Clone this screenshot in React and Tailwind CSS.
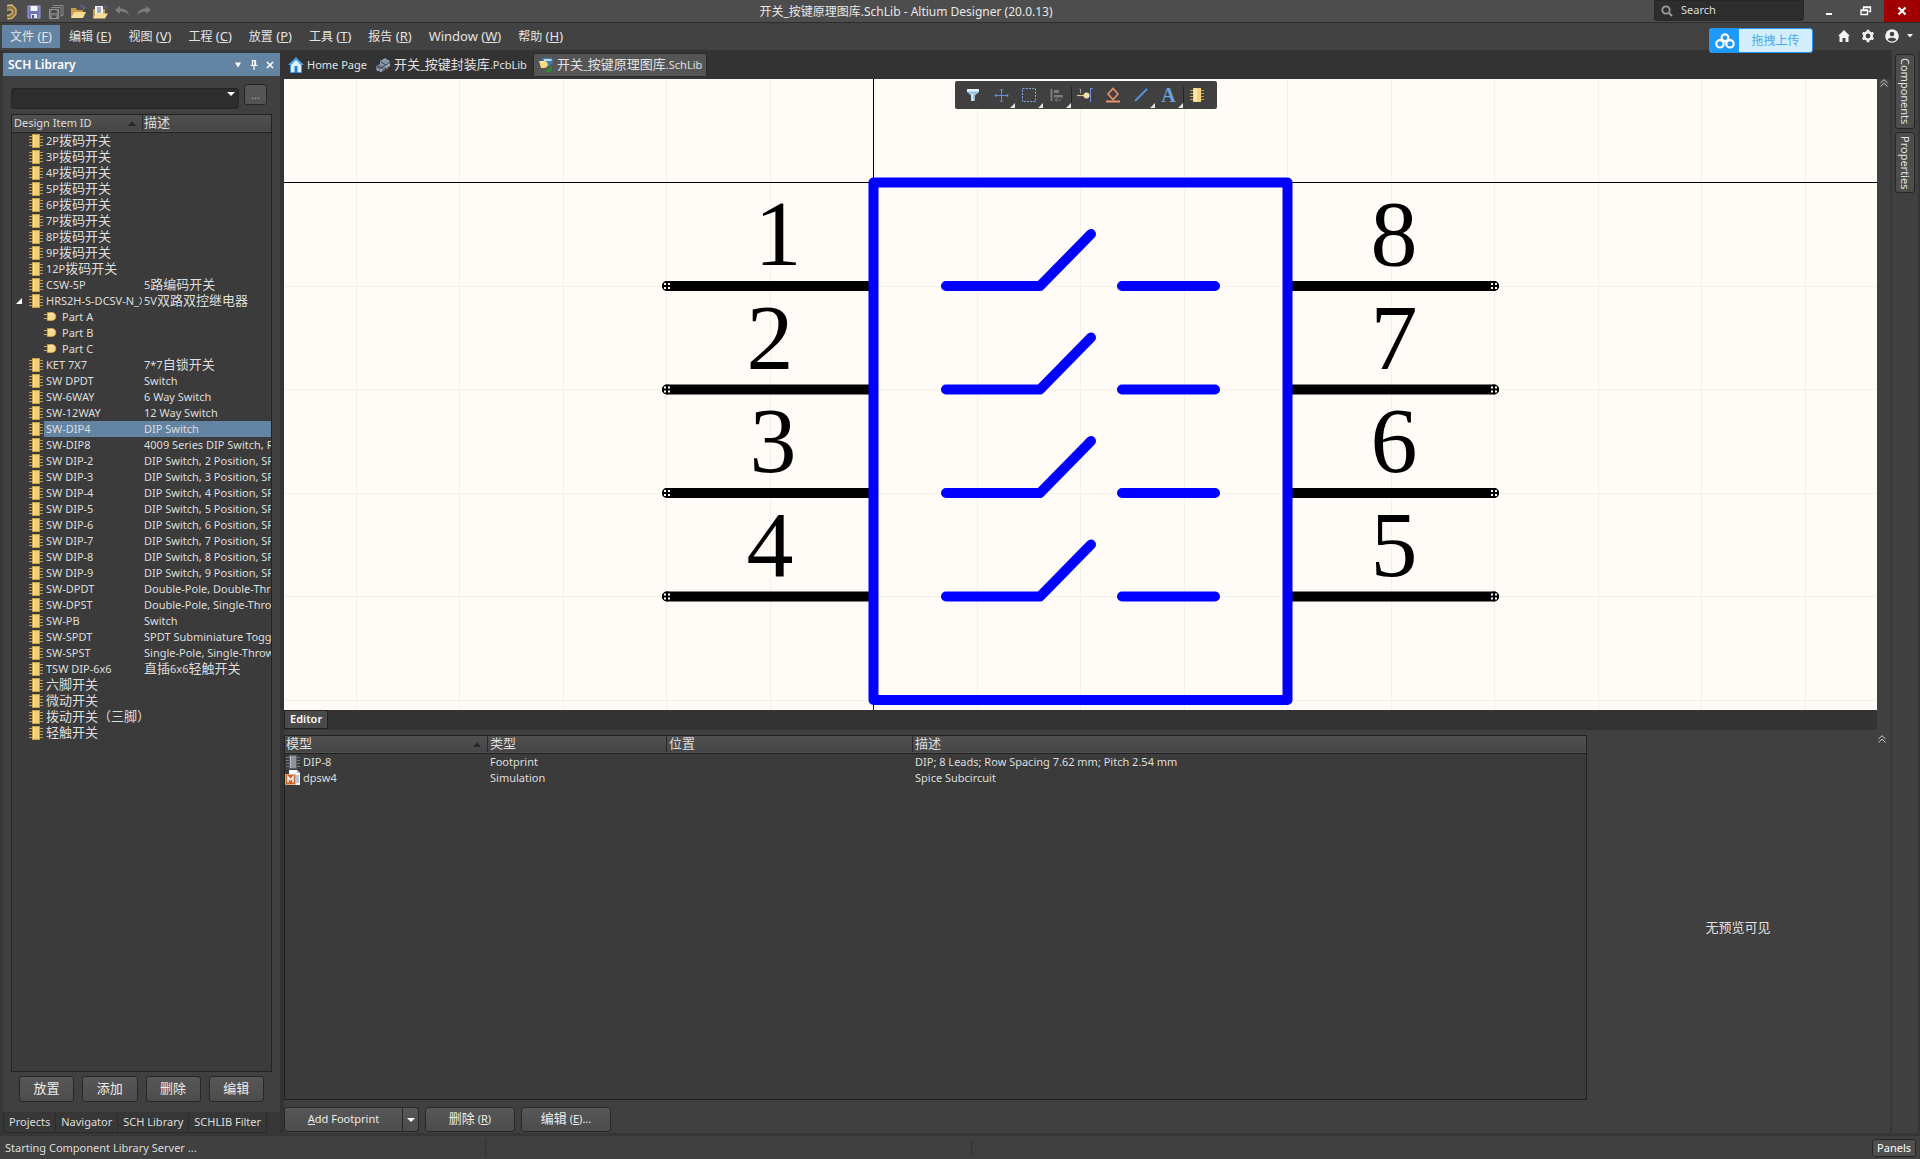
import React from "react";

const CJK = /([\u3000-\u303f\u4e00-\u9fff\uff00-\uffef]+)/;

// Chinese runs are set slightly larger than the Latin text beside them.
function Mixed({ children }) {
  return children.split(CJK).map((part, i) =>
    CJK.test(part) ? (
      <span key={i} className="text-[13px] leading-none">
        {part}
      </span>
    ) : (
      part
    )
  );
}

function ChipIcon({ gray = false }) {
  const pin = gray ? "#777b80" : "#b99a4e";
  return (
    <svg viewBox="0 0 16 16" className="block h-4 w-4 shrink-0" aria-hidden="true">
      <path d="M1 3.5h14M1 6.5h14M1 9.5h14M1 12.5h14" stroke={pin} strokeWidth="1" />
      <rect x="4.5" y="1.5" width="7" height="13" fill={gray ? "#8f949c" : "#f3cf78"} stroke={gray ? "#5c6067" : "#c99f45"} />
      <path d="M5.5 2v12" stroke={gray ? "#b8bcc4" : "#ffedb8"} strokeWidth="1" />
    </svg>
  );
}

function GateIcon() {
  return (
    <svg viewBox="0 0 16 16" className="block h-4 w-4 shrink-0" aria-hidden="true">
      <path d="M0 5.5h4M0 9.5h4" stroke="#c9a75a" />
      <path d="M3.5 3.5H8c5 0 5 8 0 8H3.5z" fill="#f6d98a" stroke="#d2a84e" strokeWidth="0.8" />
      <path d="M5 5h4" stroke="#fff3cf" />
    </svg>
  );
}

function ModelIcon() {
  return (
    <svg viewBox="0 0 16 16" className="block h-4 w-4 shrink-0" aria-hidden="true">
      <path d="M4 0h8l3 3v12H4z" fill="#f4f5f8" />
      <path d="M12 0v3h3" fill="#b9c4d8" />
      <path d="M11 6h3M11 8h3M11 10h3M11 12h3" stroke="#7d93b8" />
      <rect x="0.5" y="4.5" width="10" height="10" fill="#c8642c" stroke="#e8b494" strokeWidth="0.8" />
      <path d="M3 12.500v-5.500L5.500 10 8 7v5.500" fill="none" stroke="#fff" strokeWidth="1.400" />
    </svg>
  );
}

const ID_ROWS = [
  ["2P拨码开关"], ["3P拨码开关"], ["4P拨码开关"], ["5P拨码开关"], ["6P拨码开关"],
  ["7P拨码开关"], ["8P拨码开关"], ["9P拨码开关"], ["12P拨码开关"],
  ["CSW-5P", "5路编码开关"],
  ["HRS2H-S-DCSV-N_X", "5V双路双控继电器", "open"],
  ["Part A", "", "part"], ["Part B", "", "part"], ["Part C", "", "part"],
  ["KET 7X7", "7*7自锁开关"],
  ["SW DPDT", "Switch"],
  ["SW-6WAY", "6 Way Switch"],
  ["SW-12WAY", "12 Way Switch"],
  ["SW-DIP4", "DIP Switch", "selected"],
  ["SW-DIP8", "4009 Series DIP Switch, R"],
  ["SW DIP-2", "DIP Switch, 2 Position, SP"],
  ["SW DIP-3", "DIP Switch, 3 Position, SP"],
  ["SW DIP-4", "DIP Switch, 4 Position, SP"],
  ["SW DIP-5", "DIP Switch, 5 Position, SP"],
  ["SW DIP-6", "DIP Switch, 6 Position, SP"],
  ["SW DIP-7", "DIP Switch, 7 Position, SP"],
  ["SW DIP-8", "DIP Switch, 8 Position, SP"],
  ["SW DIP-9", "DIP Switch, 9 Position, SP"],
  ["SW-DPDT", "Double-Pole, Double-Thr"],
  ["SW-DPST", "Double-Pole, Single-Thro"],
  ["SW-PB", "Switch"],
  ["SW-SPDT", "SPDT Subminiature Togg"],
  ["SW-SPST", "Single-Pole, Single-Throw"],
  ["TSW DIP-6x6", "直插6x6轻触开关"],
  ["六脚开关"], ["微动开关"], ["拨动开关（三脚）"], ["轻触开关"],
];

const MENUS = [
  ["文件", "F"], ["编辑", "E"], ["视图", "V"], ["工程", "C"], ["放置", "P"],
  ["工具", "T"], ["报告", "R"], ["Window", "W"], ["帮助", "H"],
];

function QuickAccess() {
  return (
    <div className="flex items-center gap-1.5 pl-1">
      <svg viewBox="0 0 16 16" className="h-4 w-4" aria-label="Altium">
        <path d="M3 1.500l5-.5 4 4v5L8 14.500l-5 .500v-3.500l3-1 1.500-2V7L6.500 5.500 3 6.500z" fill="#8f7440" />
        <path d="M3 1.500l5-.5 4 4v5L8 14.500 3.500 15M3 6.500l3.500-1 2 1.500v2L6 11l-3 .500" fill="none" stroke="#d7b775" strokeWidth="1.300" />
      </svg>
      <button aria-label="Save" className="h-4 w-4">
        <svg viewBox="0 0 16 16" className="h-4 w-4">
          <path d="M2 2h12v12H2z" fill="#6d74b4" stroke="#9ba2dc" />
          <path d="M4.500 2h7v5h-7z" fill="#f4f5fb" />
          <path d="M5 10h6v4H5z" fill="#e6e8f4" />
          <path d="M6 11h2v3H6z" fill="#4b5196" />
        </svg>
      </button>
      <button aria-label="Save all" className="h-4 w-4">
        <svg viewBox="0 0 16 16" className="h-4 w-4">
          <path d="M5 1.500h10v10h-2M3 3.500h10v9" fill="none" stroke="#8a8a8a" />
          <path d="M1.500 5.500h9v9h-9z" fill="#777" stroke="#999" />
          <path d="M3.500 6h5v3h-5zM4 11.500h4V14H4z" fill="#494949" />
        </svg>
      </button>
      <button aria-label="Open" className="h-4 w-4">
        <svg viewBox="0 0 16 16" className="h-4 w-4">
          <path d="M1 14V4h5l1 2h6v8z" fill="#c99c46" />
          <path d="M1 14l3-6h12l-3 6z" fill="#f7dc95" />
          <path d="M10 3c2-2 4-1 4 1m-1.500-.500L14 5l1.500-1.500" fill="none" stroke="#5d7ba8" />
        </svg>
      </button>
      <button aria-label="Open project" className="h-4 w-4">
        <svg viewBox="0 0 16 16" className="h-4 w-4">
          <path d="M1 14V5h12v9z" fill="#c99c46" />
          <path d="M3 2h8v9H3z" fill="#f3f4f7" />
          <path d="M5 4h4M5 6h4M5 8h4" stroke="#55637c" />
          <path d="M1 14.500l3-5h12l-3 5z" fill="#f7dc95" />
          <path d="M12 3c2-1 3 0 3 2" fill="none" stroke="#5d7ba8" />
        </svg>
      </button>
      <button aria-label="Undo" className="h-4 w-4">
        <svg viewBox="0 0 16 16" className="h-4 w-4">
          <path d="M1 6l5-4v2.500c5 0 8 2 9 7-2-3-5-4-9-4V10z" fill="#7c7c7c" />
        </svg>
      </button>
      <button aria-label="Redo" className="h-4 w-4">
        <svg viewBox="0 0 16 16" className="h-4 w-4">
          <path d="M15 6l-5-4v2.500c-5 0-8 2-9 7 2-3 5-4 9-4V10z" fill="#7c7c7c" />
        </svg>
      </button>
    </div>
  );
}

function TitleBar() {
  return (
    <header className="grid h-[23px] shrink-0 grid-cols-[1fr_auto_1fr] border-b border-[#2c2c2c] bg-[#4d4d4d]">
      <QuickAccess />
      <h1 className="pr-[108px] text-[12px] leading-[23px] text-[#e8e8e8]">
        开关_按键原理图库.SchLib - Altium Designer (20.0.13)
      </h1>
      <div className="flex items-start justify-end">
        <label className="mr-2 flex h-[21px] w-[150px] items-center gap-2 rounded-b-[3px] border border-[#262626] bg-[#2d2d2d] px-1.5">
          <svg viewBox="0 0 12 12" className="h-3 w-3 shrink-0" aria-hidden="true">
            <circle cx="5" cy="5" r="3.700" fill="none" stroke="#9c9c9c" strokeWidth="1.800" />
            <path d="M8 8l3 3" stroke="#9c9c9c" strokeWidth="2" />
          </svg>
          <input aria-label="Search" placeholder="Search" className="w-full min-w-0 bg-transparent text-[11px] text-white outline-none placeholder:text-[#dcdcdc]" />
        </label>
        <button aria-label="Minimize" className="flex h-[22px] w-9 items-center justify-center">
          <svg viewBox="0 0 12 12" className="h-3 w-3"><path d="M2 8h6v2H2z" fill="#fff" /></svg>
        </button>
        <button aria-label="Restore" className="flex h-[22px] w-9 items-center justify-center">
          <svg viewBox="0 0 12 12" className="h-3 w-3" fill="none" stroke="#fff">
            <path d="M3.500 4V2h7v4.500H8.500M3.500 2.500h7" strokeWidth="1.300" />
            <path d="M1 5h6.500v4.500H1zM1 5.500h6.500" strokeWidth="1.300" />
          </svg>
        </button>
        <button aria-label="Close" className="flex h-[22px] w-9 items-center justify-center bg-[#a00000]">
          <svg viewBox="0 0 12 12" className="h-3 w-3"><path d="M2.500 2.500l7 7M9.500 2.500l-7 7" stroke="#fff" strokeWidth="2.200" /></svg>
        </button>
      </div>
    </header>
  );
}

function MenuBar() {
  return (
    <div className="flex h-[27px] shrink-0 items-start justify-between bg-[#424242] pt-0.5 pl-0.5">
      <nav className="flex gap-px">
        {MENUS.map(([label, key], i) => (
          <button
            key={key}
            className={
              "h-[23px] px-2 text-[13px] leading-[23px] whitespace-nowrap text-[#e4e4e4] " + (i === 0 ? "bg-[#6484a4]" : "")
            }
          >
            {CJK.test(label) ? <span className="text-[12px] leading-none">{label}</span> : label} (<u>{key}</u>)
          </button>
        ))}
      </nav>
      <div className="flex items-start">
        <button className="relative top-[3px] mr-[25px] flex h-[25px] items-center overflow-hidden rounded-[3px] border border-[#2a93e8] bg-[#d3effd]">
          <span className="flex h-full w-[29px] items-center justify-center bg-[#1e9bfa]">
            <svg viewBox="0 0 20 16" className="h-4 w-5" fill="none" stroke="#fff" strokeWidth="2.200" aria-hidden="true">
              <circle cx="10" cy="4.700" r="3.400" />
              <circle cx="5" cy="10.800" r="3.700" />
              <circle cx="15" cy="10.800" r="3.700" />
            </svg>
          </span>
          <span className="w-[73px] text-center text-[12px] text-[#4aa8ee]">拖拽上传</span>
        </button>
        <div className="flex h-[22px] items-center pr-[7px]">
          <button aria-label="Home" className="mr-[11px]">
            <svg viewBox="0 0 12 12" className="h-3 w-3"><path d="M6 0l6 6h-1.500v6H7.500V8h-3v4h-3V6H0z" fill="#f2f2f2" /></svg>
          </button>
          <button aria-label="Settings" className="mr-2.5">
            <svg viewBox="0 0 14 14" className="h-3.5 w-3.5">
              <circle cx="7" cy="7" r="3.700" fill="none" stroke="#f2f2f2" strokeWidth="2.600" />
              <path d="M7 .8v2M7 11.200v2M1.600 3.900l1.800 1M10.600 9.100l1.800 1M1.600 10.100l1.800-1M10.600 4.900l1.800-1" stroke="#f2f2f2" strokeWidth="2.600" />
            </svg>
          </button>
          <button aria-label="Account" className="flex items-center gap-2">
            <svg viewBox="0 0 14 14" className="h-3.5 w-3.5">
              <circle cx="7" cy="7" r="6.800" fill="#f2f2f2" />
              <circle cx="7" cy="5" r="2.300" fill="#424242" />
              <path d="M2.700 10.500c1-2.200 7.600-2.200 8.600 0-1.800 2.600-6.800 2.600-8.600 0z" fill="#424242" />
            </svg>
            <svg viewBox="0 0 6 4" className="h-1 w-1.5"><path d="M0 0h6L3 3.500z" fill="#f2f2f2" /></svg>
          </button>
        </div>
      </div>
    </div>
  );
}

function SortArrow() {
  return (
    <svg viewBox="0 0 8 5" className="mr-1.5 h-[5px] w-2" aria-hidden="true">
      <path d="M0 5l4-4.500L8 5z" fill="#262626" />
    </svg>
  );
}

function LibraryPanel() {
  const btn =
    "h-[26px] flex-1 rounded-[3px] border border-[#272727] bg-linear-to-b from-[#575757] to-[#4c4c4c] text-[13px] text-[#ececec]";
  return (
    <aside className="flex w-[280px] shrink-0 flex-col bg-[#373737] pt-[3px] pl-[3px]">
      <div className="flex min-h-0 flex-1 flex-col bg-[#404040]">
        <div className="flex h-[23px] shrink-0 items-center justify-between bg-[#6484a4] pr-1.5 pl-[5px]">
          <h2 className="text-[12px] font-semibold text-white">SCH Library</h2>
          <div className="flex items-center gap-2">
            <button aria-label="Panel menu">
              <svg viewBox="0 0 8 8" className="h-2 w-2"><path d="M1 1.500h6L4 6.500z" fill="#fff" /></svg>
            </button>
            <button aria-label="Pin">
              <svg viewBox="0 0 8 10" className="h-2.5 w-2">
                <path d="M2 .5h4M2.500 0v5M5.500 0v5M4.800 0v5M0.500 5.500h7M4 6v4" stroke="#fff" strokeWidth="1.200" />
              </svg>
            </button>
            <button aria-label="Close panel">
              <svg viewBox="0 0 8 8" className="h-2 w-2"><path d="M1 1l6 6M7 1L1 7" stroke="#fff" strokeWidth="1.600" /></svg>
            </button>
          </div>
        </div>

        <div className="mt-2 flex h-[21px] shrink-0 gap-[5px] px-2">
          <div className="relative w-[228px]">
            <select aria-label="Filter" className="h-full w-full appearance-none rounded-[3px] border border-[#262626] bg-[#2d2d2d] text-[11px] text-white">
              <option></option>
            </select>
            <svg viewBox="0 0 8 4" className="pointer-events-none absolute top-2 right-1 h-1 w-2"><path d="M0 0h8L4 4z" fill="#fff" /></svg>
          </div>
          <button className="w-[23px] rounded-[3px] border border-[#272727] bg-[#555] text-[11px] leading-5 text-[#aaa]">...</button>
        </div>

        <div className="mx-2 mt-[9px] min-h-0 w-[261px] flex-1 overflow-hidden border border-[#222] bg-[#3b3b3b]">
          <table className="w-full table-fixed border-collapse text-[11px] leading-4 text-[#dedede]">
            <colgroup>
              <col className="w-8" />
              <col className="w-[98px]" />
              <col />
            </colgroup>
            <thead>
              <tr className="h-[17px] border-b border-[#222] bg-linear-to-b from-[#505050] to-[#464646] text-left">
                <th colSpan="2" className="p-0 pl-0.5 font-normal">
                  <div className="flex h-4 items-center justify-between">Design Item ID<SortArrow /></div>
                </th>
                <th className="p-0 font-normal">
                  <div className="h-4 border-l border-[#2a2a2a] pl-px"><Mixed>描述</Mixed></div>
                </th>
              </tr>
            </thead>
            <tbody>
              {ID_ROWS.map(([id, desc = "", kind]) => (
                <tr key={id} className="h-4">
                  <td className="p-0">
                    {kind !== "part" && (
                      <div className="flex h-4 items-center justify-end gap-1.5">
                        {kind === "open" && (
                          <svg viewBox="0 0 6 6" className="h-1.5 w-1.5"><path d="M6 0v6H0z" fill="#fff" /></svg>
                        )}
                        <ChipIcon />
                      </div>
                    )}
                  </td>
                  <td className={"p-0 whitespace-nowrap " + (kind === "selected" ? "bg-[#6484a4]" : "")}>
                    <div className={"flex h-4 " + (kind === "part" ? "gap-0.5" : "pl-0.5") + (desc ? " overflow-hidden" : "")}>
                      {kind === "part" && <GateIcon />}
                      <span><Mixed>{id}</Mixed></span>
                    </div>
                  </td>
                  <td className={"overflow-hidden p-0 pl-0.5 whitespace-nowrap " + (kind === "selected" ? "bg-[#6484a4]" : "")}>
                    <div className="h-4"><Mixed>{desc}</Mixed></div>
                  </td>
                </tr>
              ))}
            </tbody>
          </table>
        </div>

        <div className="flex shrink-0 gap-2 pt-1 pr-4 pb-[10px] pl-4">
          <button className={btn}>放置</button>
          <button className={btn}>添加</button>
          <button className={btn}>删除</button>
          <button className={btn}>编辑</button>
        </div>
      </div>

      <div className="flex h-[21px] shrink-0 self-start border border-t-0 border-[#2b2b2b] pt-px text-[11px] text-[#dedede]">
        {["Projects", "Navigator", "SCH Library", "SCHLIB Filter"].map((t, i) => (
          <button key={t} className={"px-[5px] whitespace-nowrap " + (i ? "border-l border-[#2b2b2b]" : "")}>{t}</button>
        ))}
      </div>
    </aside>
  );
}

function DocumentTabs() {
  return (
    <div className="flex h-[29px] shrink-0 items-center bg-[#333] pt-px text-[11px] text-[#e2e2e2]">
      <button className="flex h-6 items-center gap-[3px] pr-2 pl-1">
        <svg viewBox="0 0 16 16" className="h-4 w-4">
          <path d="M8 0l8 8h-2v8H2V8H0z" fill="#4a9bea" />
          <path d="M8 3l5 5v7H3V8z" fill="#dcefff" />
          <path d="M6.500 9h3v7h-3z" fill="#2f7fd0" />
        </svg>
        Home Page
      </button>
      <button className="flex h-6 items-center gap-[3px] pr-1.5">
        <svg viewBox="0 0 16 16" className="h-4 w-4">
          <path d="M1 9l5-3 4 2v5l-4 2-5-2z" fill="#6f7a86" />
          <path d="M5 4l5-3 5 3v4l-4 3-6-3z" fill="#8496a8" />
          <path d="M2 9l4 2 4-3M6 5l5 3 4-3" fill="none" stroke="#3d4650" />
          <path d="M3 12v2M6 12v3M12 9v3M14 7v3" stroke="#c3ccd5" />
        </svg>
        <span><Mixed>开关_按键封装库.PcbLib</Mixed></span>
      </button>
      <button className="flex h-6 items-center gap-[3px] rounded-t-[3px] border border-[#2a2a2a] bg-[#555] px-1">
        <svg viewBox="0 0 16 16" className="h-4 w-4">
          <path d="M4 1h10l1 4-3 4H5z" fill="#3f7bb8" />
          <path d="M6 2h7l1 2H6z" fill="#b9d9f2" />
          <path d="M7 14l7-5v4l-4 3z" fill="#2e8b34" />
          <path d="M1 4h5c5 0 5 7 0 7H3z" fill="#f8dc7c" />
          <path d="M2 5h4" stroke="#fff5cc" />
        </svg>
        <span><Mixed>开关_按键原理图库.SchLib</Mixed></span>
      </button>
    </div>
  );
}

const TOOLS = [
  { name: "Filter", icon: <><path d="M2 2h12v3l-4 3.500V14H6V8.500L2 5z" fill="#9cc3dc" /><path d="M2 2h12v2.500H2zM6.500 7H8v7H6.500z" fill="#dff1fa" /></> },
  { name: "Move", menu: true, icon: <path d="M8.500 2v13M2 8.500h13M7 3.500L8.500 2 10 3.500M7 13.500L8.500 15l1.500-1.500M3.500 7L2 8.500 3.500 10M13.500 7L15 8.500 13.500 10" fill="none" stroke="#6b8fd6" /> },
  { name: "Select", menu: true, icon: <path d="M1.500 1.500h13v13h-13z" fill="none" stroke="#86a8ee" strokeDasharray="2 1.250" /> },
  { name: "Align", menu: true, icon: <><path d="M2.500 2v12" stroke="#7c7c7c" strokeWidth="2" /><path d="M5 3h5v3H5zM5 8h9v2.500H5z" fill="#7c7c7c" /><path d="M6 13h6M8 11.500L6 13l2 1.500" fill="none" stroke="#7c7c7c" /></> },
  { name: "Place pin", sep: true, icon: <><path d="M0 8.500h8" stroke="#e2c585" strokeWidth="1.200" /><circle cx="9.500" cy="8.500" r="3" fill="#f3e0ae" /><path d="M13.500 15V1.500H16" fill="none" stroke="#6b8fd6" /><path d="M2.500 2h1V6" fill="none" stroke="#a5a5a5" /></> },
  { name: "Place IEEE symbol", icon: <><path d="M8 1.500l5 5.500-5 5.500L3 7z" fill="none" stroke="#e79468" strokeWidth="1.600" /><path d="M1 14.500h14" stroke="#e79468" strokeWidth="2" /></> },
  { name: "Place line", menu: true, icon: <path d="M2 14L14 2" stroke="#5a8fdc" strokeWidth="2" /> },
  { name: "Place text", menu: true, letter: true },
  { name: "Place part", sep: true, icon: <><path d="M1 3.500h14M1 6.500h14M1 9.500h14M1 12.500h14" stroke="#c9a24a" /><path d="M4 1h8v14H4z" fill="#f6d67c" /><path d="M5 2h3v12H5z" fill="#fce9ae" /></> },
];

function CanvasToolbar() {
  return (
    <div role="toolbar" aria-label="Active bar" className="absolute inset-x-0 top-0.5 flex justify-center pl-2.5">
      <div className="flex h-7 items-center rounded-[2px] bg-[#404040] pr-1.5 pl-1">
        {TOOLS.map((t) => (
          <button
            key={t.name}
            aria-label={t.name}
            className="relative flex h-7 w-7 items-center justify-center"
          >
            {t.sep && <span className="absolute top-1.5 left-0 h-4 w-px bg-[#222]" />}
            {t.letter ? (
              <span className="font-['Liberation_Serif',serif] text-[20px] leading-none font-bold text-[#6ba3de]">A</span>
            ) : (
              <svg viewBox="0 0 16 16" className="h-4 w-4">{t.icon}</svg>
            )}
            {t.menu && (
              <svg viewBox="0 0 5 5" className="absolute right-0 bottom-px h-[5px] w-[5px]"><path d="M5 0v5H0z" fill="#e2e2e2" /></svg>
            )}
          </button>
        ))}
      </div>
    </div>
  );
}

const GRID_X = [-5, -4, -3, -2, -1, 1, 2, 3, 4, 5, 6, 7, 8, 9];
const PIN_ROWS = [
  { left: "1", lx: 778, right: "8" },
  { left: "2", lx: 770, right: "7" },
  { left: "3", lx: 773, right: "6" },
  { left: "4", lx: 770, right: "5" },
];
const STEP = 103.5;

function PinEnd({ x, y }) {
  return (
    <g>
      <circle cx={x} cy={y} r="5" fill="#000" />
      <path
        d={`M${x - 3} ${y - 2}h2M${x + 1} ${y - 2}h2M${x - 3} ${y + 2}h2M${x + 1} ${y + 2}h2`}
        stroke="#fff"
        strokeWidth="2"
      />
    </g>
  );
}

function Schematic() {
  return (
    <svg viewBox="284 79 1593 631" preserveAspectRatio="xMidYMid slice" className="block h-full w-full" role="img" aria-label="SW-DIP4">
      <g stroke="#f4f0ec" strokeWidth="1">
        {GRID_X.map((n) => (
          <path key={n} d={`M${Math.round(873 + n * STEP) + 0.5} 79v631`} />
        ))}
        {[1, 2, 3, 4, 5].map((n) => (
          <path key={n} d={`M284 ${Math.round(182 + n * STEP) + 0.5}h1593`} />
        ))}
      </g>
      <path d="M873.500 79v631M284 182.500h1593" stroke="#000" strokeWidth="1" />
      {PIN_ROWS.map(({ left, lx, right }, i) => {
        const y = 286 + i * STEP;
        return (
          <g key={left}>
            <path d={`M667 ${y}H870M1292 ${y}H1494`} stroke="#000" strokeWidth="10" strokeLinecap="round" />
            <PinEnd x={667} y={y} />
            <PinEnd x={1494} y={y} />
            <g fontFamily="'Liberation Serif', serif" fontSize="94" textAnchor="middle">
              <text x={lx} y={y - 21}>{left}</text>
              <text x="1394" y={y - 21}>{right}</text>
            </g>
            <path
              d={`M946 ${y}H1040L1091 ${y - 52}M1122 ${y}H1215`}
              fill="none"
              stroke="#0000ff"
              strokeWidth="10"
              strokeLinecap="round"
              strokeLinejoin="round"
            />
          </g>
        );
      })}
      <path d="M873.500 182.500H1287.500V700H873.500z" fill="none" stroke="#0000ff" strokeWidth="10" strokeLinejoin="round" />
    </svg>
  );
}

function DoubleChevron() {
  return (
    <svg viewBox="0 0 8 8" className="h-2 w-2" fill="none" stroke="#d0d0d0" aria-hidden="true">
      <path d="M0.500 4L4 .700 7.500 4M0.500 7.500L4 4.200 7.500 7.500" />
    </svg>
  );
}

function EditorPanel() {
  const btn =
    "h-[25px] rounded-[3px] border border-[#272727] bg-linear-to-b from-[#575757] to-[#4c4c4c] text-[11px] text-[#ececec]";
  return (
    <section className="flex h-[423px] shrink-0 flex-col bg-[#404040]">
      <div className="mr-[13px] flex h-5 shrink-0 bg-[#333]">
        <button className="h-[19px] border border-[#222] bg-[#4a4a4a] px-[5px] text-[11px] font-semibold text-white">Editor</button>
      </div>
      <div className="flex min-h-0 flex-1 pt-[5px]">
        <div className="flex min-w-0 flex-1 flex-col">
          <div className="min-h-0 flex-1 border border-[#222] bg-[#3b3b3b]">
            <table className="w-full table-fixed border-collapse text-[11px] leading-4 text-[#dedede]">
              <colgroup>
                <col className="w-[202px]" />
                <col className="w-[179px]" />
                <col className="w-[246px]" />
                <col />
              </colgroup>
              <thead>
                <tr className="h-[17px] border-b border-[#222] bg-linear-to-b from-[#505050] to-[#464646] text-left">
                  <th className="p-0 pl-px font-normal">
                    <div className="flex h-4 items-center justify-between"><span><Mixed>模型</Mixed></span><SortArrow /></div>
                  </th>
                  {["类型", "位置", "描述"].map((h) => (
                    <th key={h} className="p-0 font-normal"><div className="h-4 border-l border-[#2a2a2a] pl-0.5"><Mixed>{h}</Mixed></div></th>
                  ))}
                </tr>
              </thead>
              <tbody>
                <tr className="h-4">
                  <td className="p-0"><div className="flex gap-0.5"><ChipIcon gray />DIP-8</div></td>
                  <td className="p-0 pl-[3px]">Footprint</td>
                  <td className="p-0"></td>
                  <td className="p-0 pl-[3px]">DIP; 8 Leads; Row Spacing 7.62 mm; Pitch 2.54 mm</td>
                </tr>
                <tr className="h-4">
                  <td className="p-0"><div className="flex gap-0.5"><ModelIcon />dpsw4</div></td>
                  <td className="p-0 pl-[3px]">Simulation</td>
                  <td className="p-0"></td>
                  <td className="p-0 pl-[3px]">Spice Subcircuit</td>
                </tr>
              </tbody>
            </table>
          </div>
          <div className="flex shrink-0 gap-1.5 pt-[7px] pb-[1px]">
            <div className="flex">
              <button className={btn + " w-[119px] rounded-r-none"}><u>A</u>dd Footprint</button>
              <button aria-label="More footprint options" className={btn + " flex w-4 items-center justify-center rounded-l-none border-l-0"}>
                <svg viewBox="0 0 8 4" className="h-1 w-2"><path d="M0 0h8L4 4z" fill="#fff" /></svg>
              </button>
            </div>
            <button className={btn + " w-[90px]"}><Mixed>删除</Mixed> (<u>R</u>)</button>
            <button className={btn + " w-[90px]"}><Mixed>编辑</Mixed> (<u>E</u>)...</button>
          </div>
        </div>
        <div className="flex w-[303px] shrink-0">
          <p className="flex-1 self-center pb-3 pl-[11px] text-center text-[13px] text-[#e0e0e0]">无预览可见</p>
          <button aria-label="Collapse preview" className="mr-1 self-start"><DoubleChevron /></button>
        </div>
      </div>
    </section>
  );
}

function SideTabs() {
  const tab =
    "rounded-[3px] border border-[#262626] bg-[#4d4d4d] text-[11px] leading-[18px] text-[#e4e4e4] [writing-mode:vertical-rl]";
  return (
    <div className="flex w-[30px] shrink-0 flex-col items-center gap-[3px] border-x-2 border-[#363636] bg-[#404040] pt-1">
      <button className={tab + " h-[75px]"}>Components</button>
      <button className={tab + " h-[61px]"}>Properties</button>
    </div>
  );
}

export default function App() {
  return (
    <div className="flex h-screen flex-col overflow-hidden bg-[#404040] font-['Noto_Sans','Noto_Sans_CJK_SC',sans-serif]">
      <TitleBar />
      <MenuBar />
      <div className="flex min-h-0 flex-1">
        <LibraryPanel />
        <main className="flex min-w-0 flex-1 flex-col border-l-4 border-[#333]">
          <DocumentTabs />
          <div className="flex min-h-0 flex-1">
            <div className="relative min-w-0 flex-1 overflow-hidden bg-[#fffcf8]">
              <Schematic />
              <CanvasToolbar />
            </div>
            <div className="flex w-[13px] shrink-0 items-start justify-center bg-[#404040]">
              <button aria-label="Collapse" className="block"><DoubleChevron /></button>
            </div>
          </div>
          <EditorPanel />
        </main>
        <SideTabs />
      </div>
      <footer className="flex h-[26px] shrink-0 items-center border-t-3 border-[#363636] text-[11px] text-[#dedede]">
        <span className="h-4 w-[486px] border-r border-[#333] pl-[5px] leading-4">Starting Component Library Server ...</span>
        <span className="h-4 w-[486px] border-r border-[#333]" />
        <span className="flex flex-1 justify-end pr-1">
          <button className="h-[18px] rounded-[3px] border border-[#262626] bg-[#505050] px-1 leading-4 text-white">Panels</button>
        </span>
      </footer>
    </div>
  );
}
